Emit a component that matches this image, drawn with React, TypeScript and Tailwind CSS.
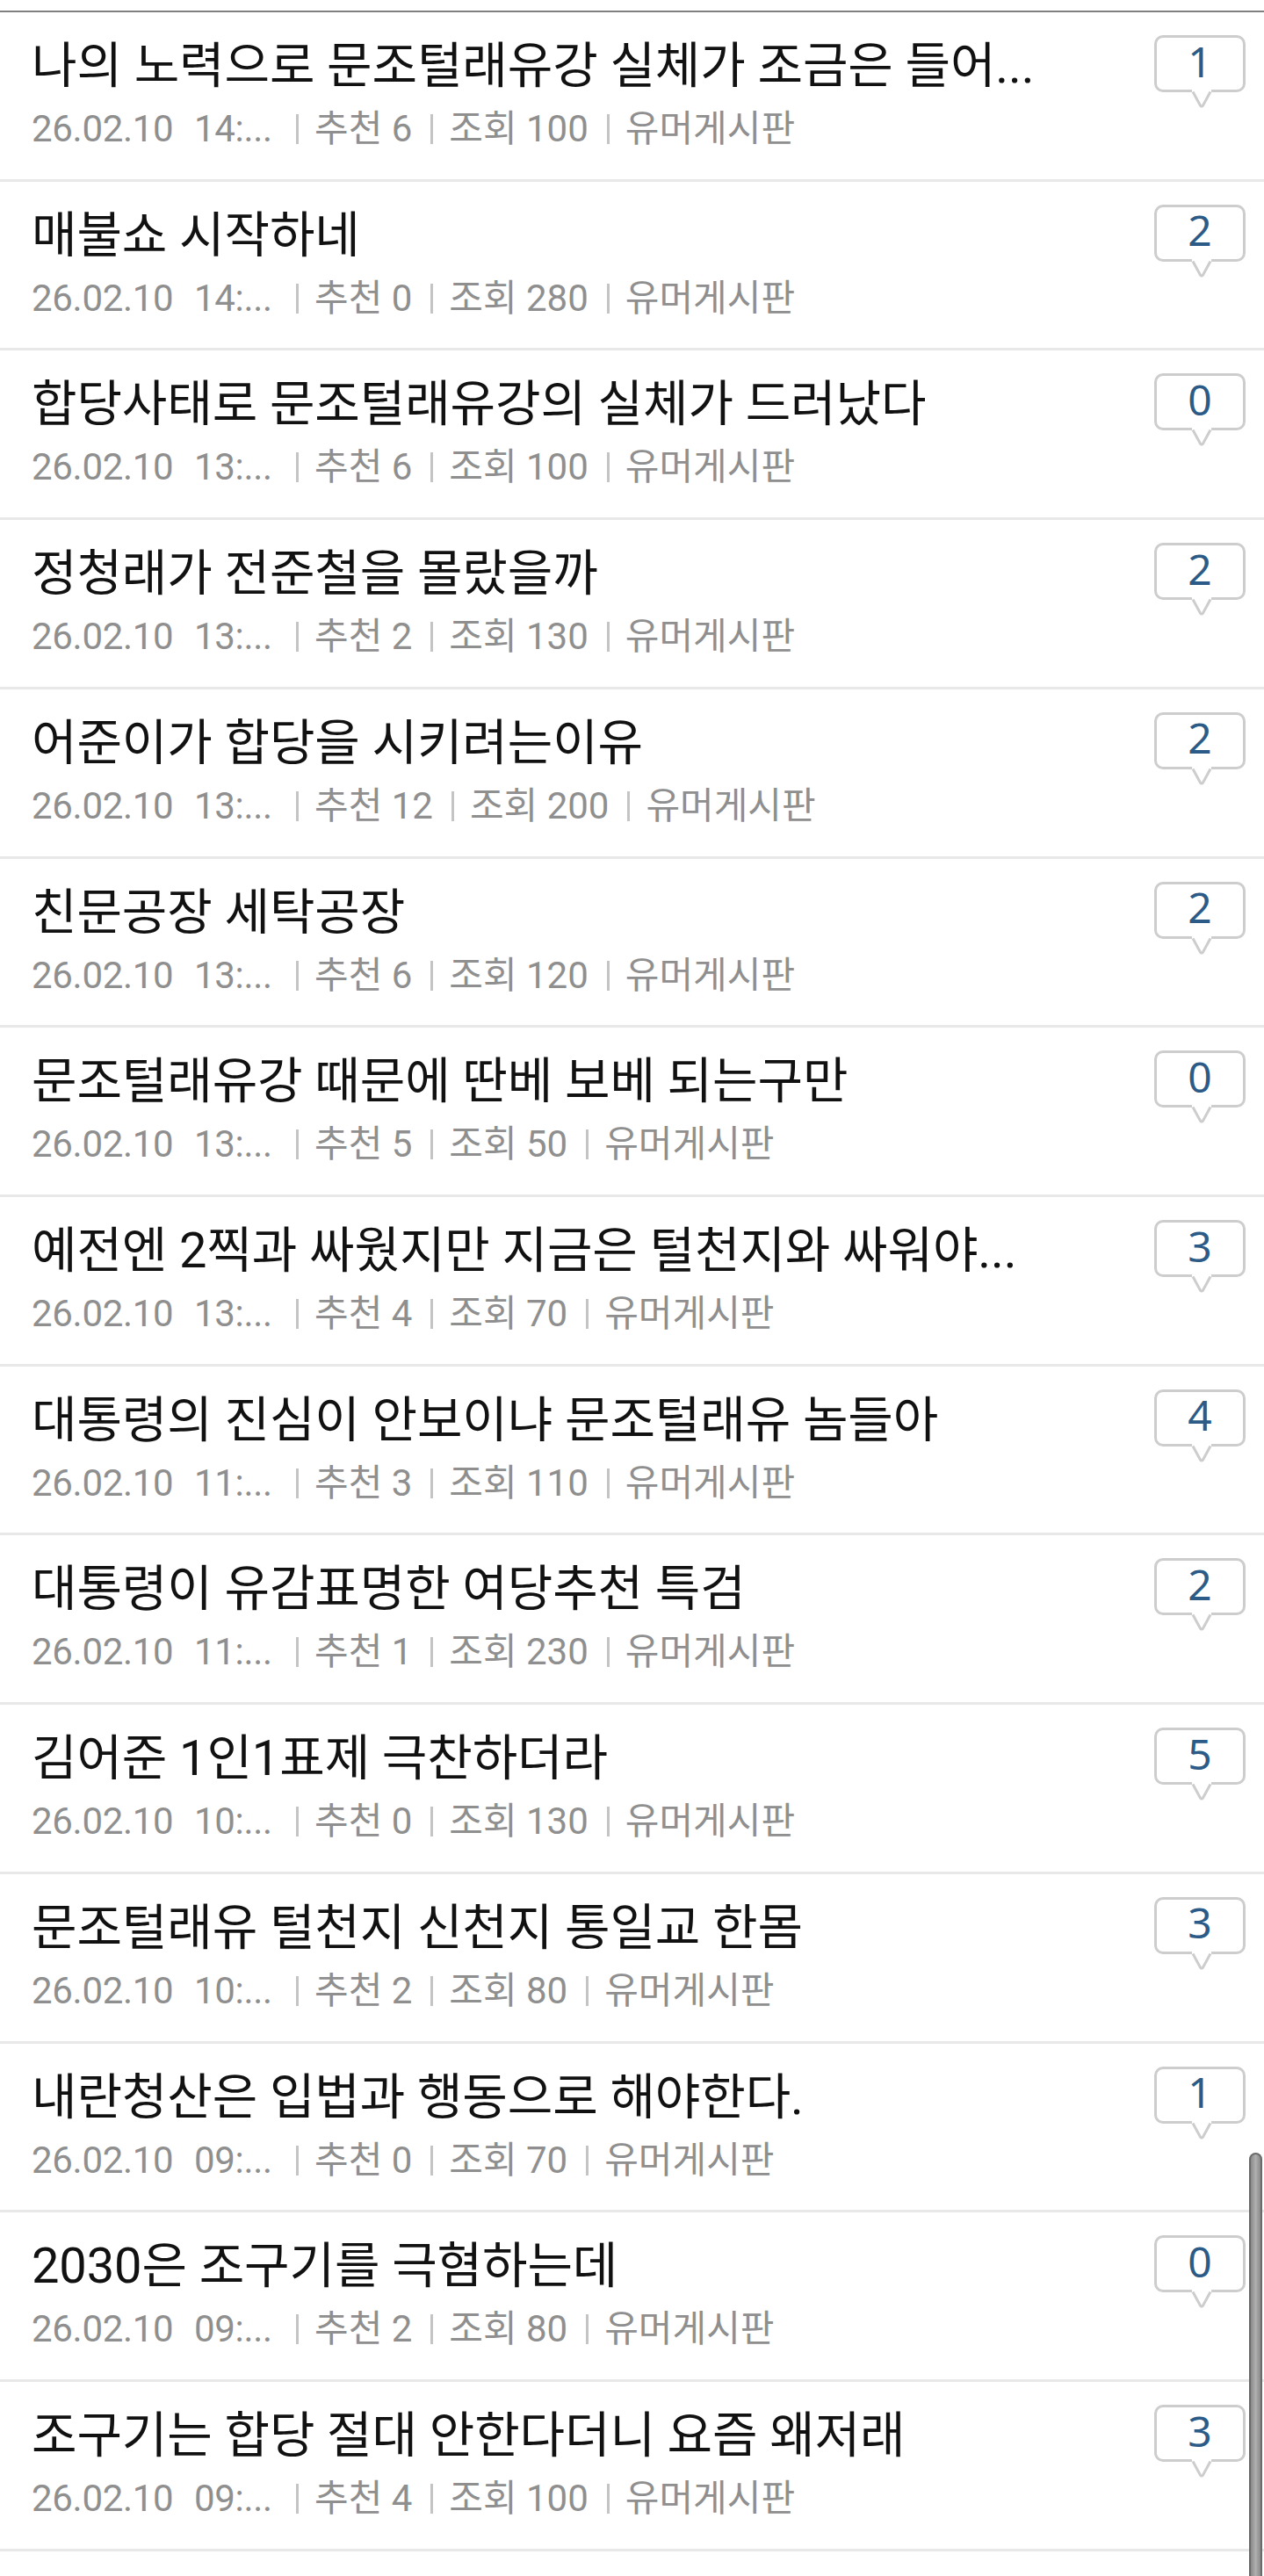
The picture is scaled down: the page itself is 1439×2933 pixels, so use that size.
const rows: [string, string, number, number, number][] = [
  ["나의 노력으로 문조털래유강 실체가 조금은 들어...", "14:...", 6, 100, 1],
  ["매불쇼 시작하네", "14:...", 0, 280, 2],
  ["합당사태로 문조털래유강의 실체가 드러났다", "13:...", 6, 100, 0],
  ["정청래가 전준철을 몰랐을까", "13:...", 2, 130, 2],
  ["어준이가 합당을 시키려는이유", "13:...", 12, 200, 2],
  ["친문공장 세탁공장", "13:...", 6, 120, 2],
  ["문조털래유강 때문에 딴베 보베 되는구만", "13:...", 5, 50, 0],
  ["예전엔 2찍과 싸웠지만 지금은 털천지와 싸워야...", "13:...", 4, 70, 3],
  ["대통령의 진심이 안보이냐 문조털래유 놈들아", "11:...", 3, 110, 4],
  ["대통령이 유감표명한 여당추천 특검", "11:...", 1, 230, 2],
  ["김어준 1인1표제 극찬하더라", "10:...", 0, 130, 5],
  ["문조털래유 털천지 신천지 통일교 한몸", "10:...", 2, 80, 3],
  ["내란청산은 입법과 행동으로 해야한다.", "09:...", 0, 70, 1],
  ["2030은 조구기를 극혐하는데", "09:...", 2, 80, 0],
  ["조구기는 합당 절대 안한다더니 요즘 왜저래", "09:...", 4, 100, 3],
];

function Sep() {
  return <span className="ml-[21px] mr-[18px] h-[34px] w-[3px] shrink-0 bg-[#c4c4c4]" />;
}

function Row({ row }: { row: [string, string, number, number, number] }) {
  const [title, time, up, views, replies] = row;
  return (
    <li className="flex h-[192.72px] items-start justify-between border-b-[3px] border-[#e8e8e8] pl-[36px] pr-[21px]">
      <div className="min-w-0">
        <div className="mt-[25px] h-[72px] whitespace-nowrap text-[56px] leading-[72px] tracking-[-0.1px] text-[#111111]">{title}</div>
        <div className="mt-[11px] flex h-[50px] items-center whitespace-nowrap text-[42px] leading-[50px] text-[#8f8f8f]">
          <span className="w-[185px] shrink-0 tracking-[-0.3px]">26.02.10</span>
          <span className="w-[95px] shrink-0 tracking-[-0.3px]">{time}</span>
          <Sep />
          <span>추천 {up}</span>
          <Sep />
          <span>조회 {views}</span>
          <Sep />
          <span>유머게시판</span>
        </div>
      </div>
      <div className="relative mt-[26px] flex h-[65px] w-[104px] shrink-0 items-center justify-center rounded-[10px] border-[3px] border-[#cdcdcd] bg-white pb-[6px] font-['Noto_Sans',sans-serif] text-[48px] leading-none text-[#2b5b86]">
        {replies}
        <svg className="absolute left-[39px] top-[59px]" width="24" height="22" viewBox="0 0 24 22" fill="none">
          <path d="M1 0h22v3L14 19q-2 2-4 0L1 3z" fill="#fff" />
          <path d="M2 2.5l8.4 15.5q1.6 2 3.2 0L22 2.5" stroke="#cdcdcd" strokeWidth="3" />
        </svg>
      </div>
    </li>
  );
}

export default function App() {
  return (
    <div className="relative h-[2933px] w-[1439px] overflow-hidden bg-white pt-[12px] font-['Roboto','Noto_Sans_CJK_KR',sans-serif]">
      <ul className="border-t-[2px] border-[#808080]">
        {rows.map((r, i) => (
          <Row key={i} row={r} />
        ))}
      </ul>
      <div className="absolute left-[1422px] top-[2451px] h-[482px] w-[15px] rounded-t-[8px] border-x-[2px] border-t-[2px] border-[#6a6a6a] bg-gradient-to-r from-[#8a8a8a] via-[#b0b0b0] to-[#8a8a8a]" />
    </div>
  );
}
